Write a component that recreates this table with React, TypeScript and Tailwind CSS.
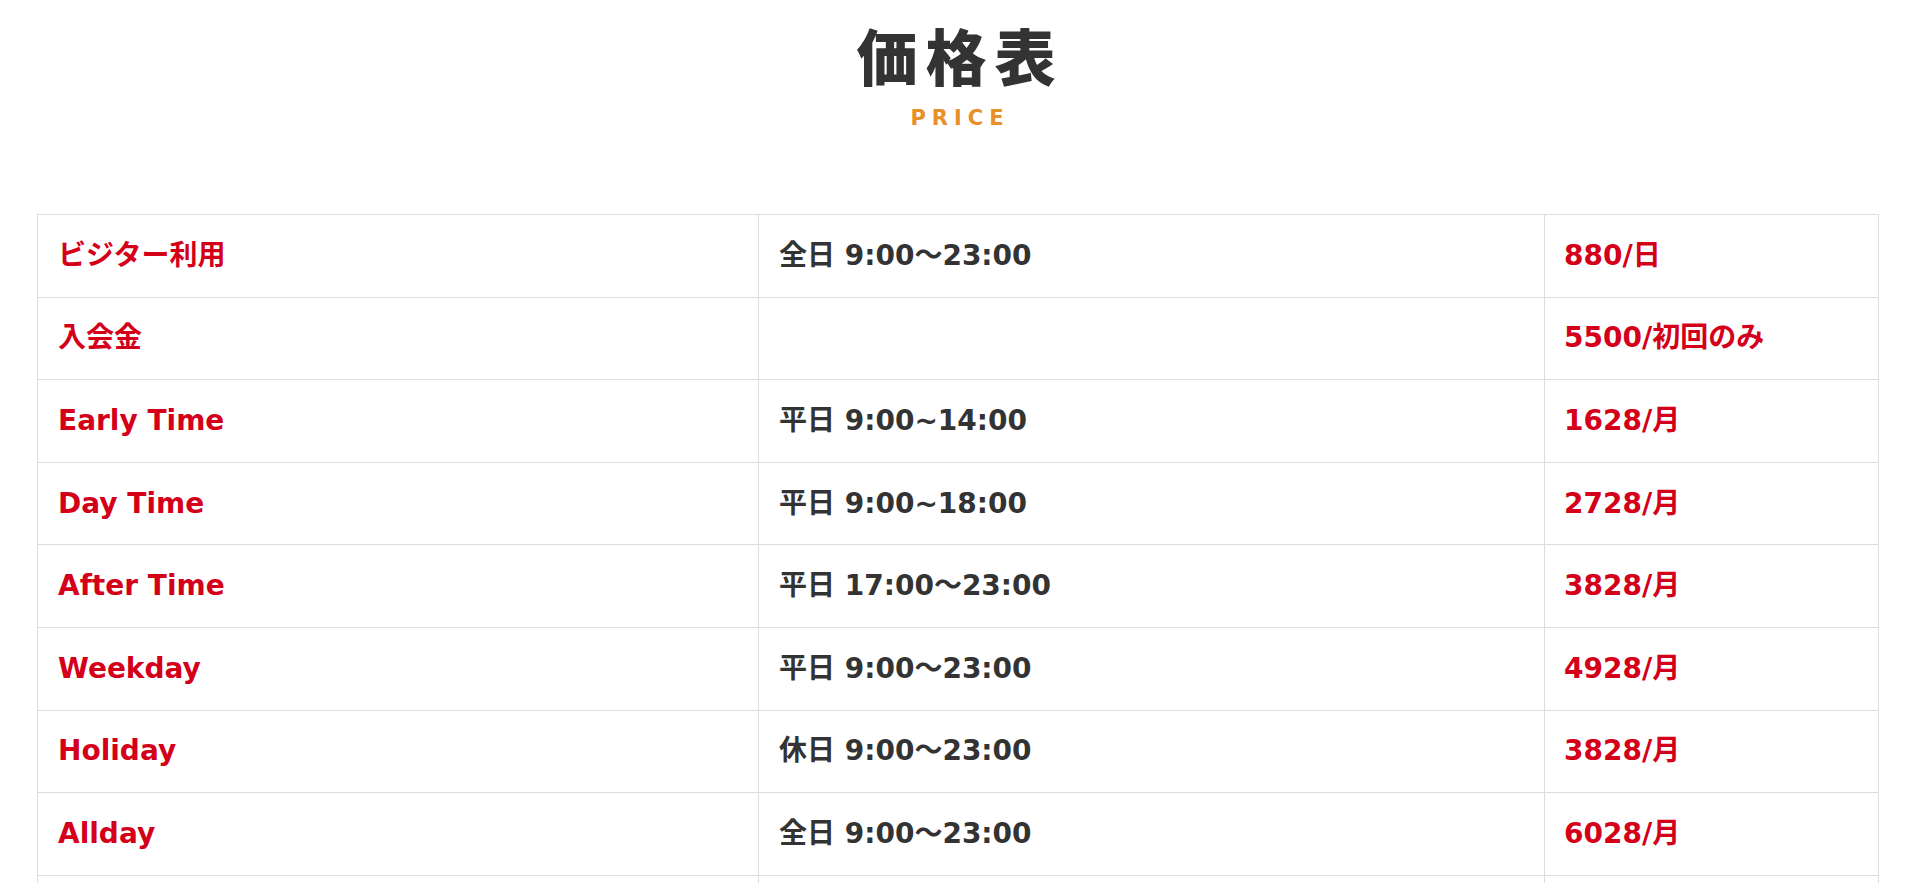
import React from "react";

const rows: [string, string, string][] = [
  ["ビジター利用", "全日 9:00〜23:00", "880/日"],
  ["入会金", "", "5500/初回のみ"],
  ["Early Time", "平日 9:00~14:00", "1628/月"],
  ["Day Time", "平日 9:00~18:00", "2728/月"],
  ["After Time", "平日 17:00〜23:00", "3828/月"],
  ["Weekday", "平日 9:00〜23:00", "4928/月"],
  ["Holiday", "休日 9:00〜23:00", "3828/月"],
  ["Allday", "全日 9:00〜23:00", "6028/月"],
  ["", "", ""],
];

const font = { fontFamily: '"DejaVu Sans", "Noto Sans CJK JP", sans-serif' };

export default function App() {
  return (
    <div className="min-h-screen bg-white" style={font}>
      <div className="flex flex-col items-center pt-[15px]">
        <h2
          className="text-[61px] leading-[80px] font-black tracking-[8px] text-[#333333]"
          style={{ fontFamily: '"Noto Sans CJK JP", sans-serif' }}
        >
          価格表
        </h2>
        <p className="text-[21px] leading-[30px] font-bold tracking-[6px] text-[#e88f2a] mt-[8px]">
          PRICE
        </p>
      </div>
      <div className="mt-[81px] pl-[37px] pr-[41px]">
        <table className="w-full border-collapse">
          <tbody>
            {rows.map((r, i) => (
              <tr key={i} className="h-[82.6px]">
                <td className="w-[721px] border border-[#dddddd] pl-[20px] text-[28px] font-bold text-[#d4001a] align-middle">
                  {r[0]}
                </td>
                <td className="w-[786px] border border-[#dddddd] pl-[20px] text-[28px] font-bold text-[#333333] align-middle">
                  {r[1]}
                </td>
                <td className="border border-[#dddddd] pl-[19px] text-[28px] font-bold text-[#d4001a] align-middle">
                  {r[2]}
                </td>
              </tr>
            ))}
          </tbody>
        </table>
      </div>
    </div>
  );
}
